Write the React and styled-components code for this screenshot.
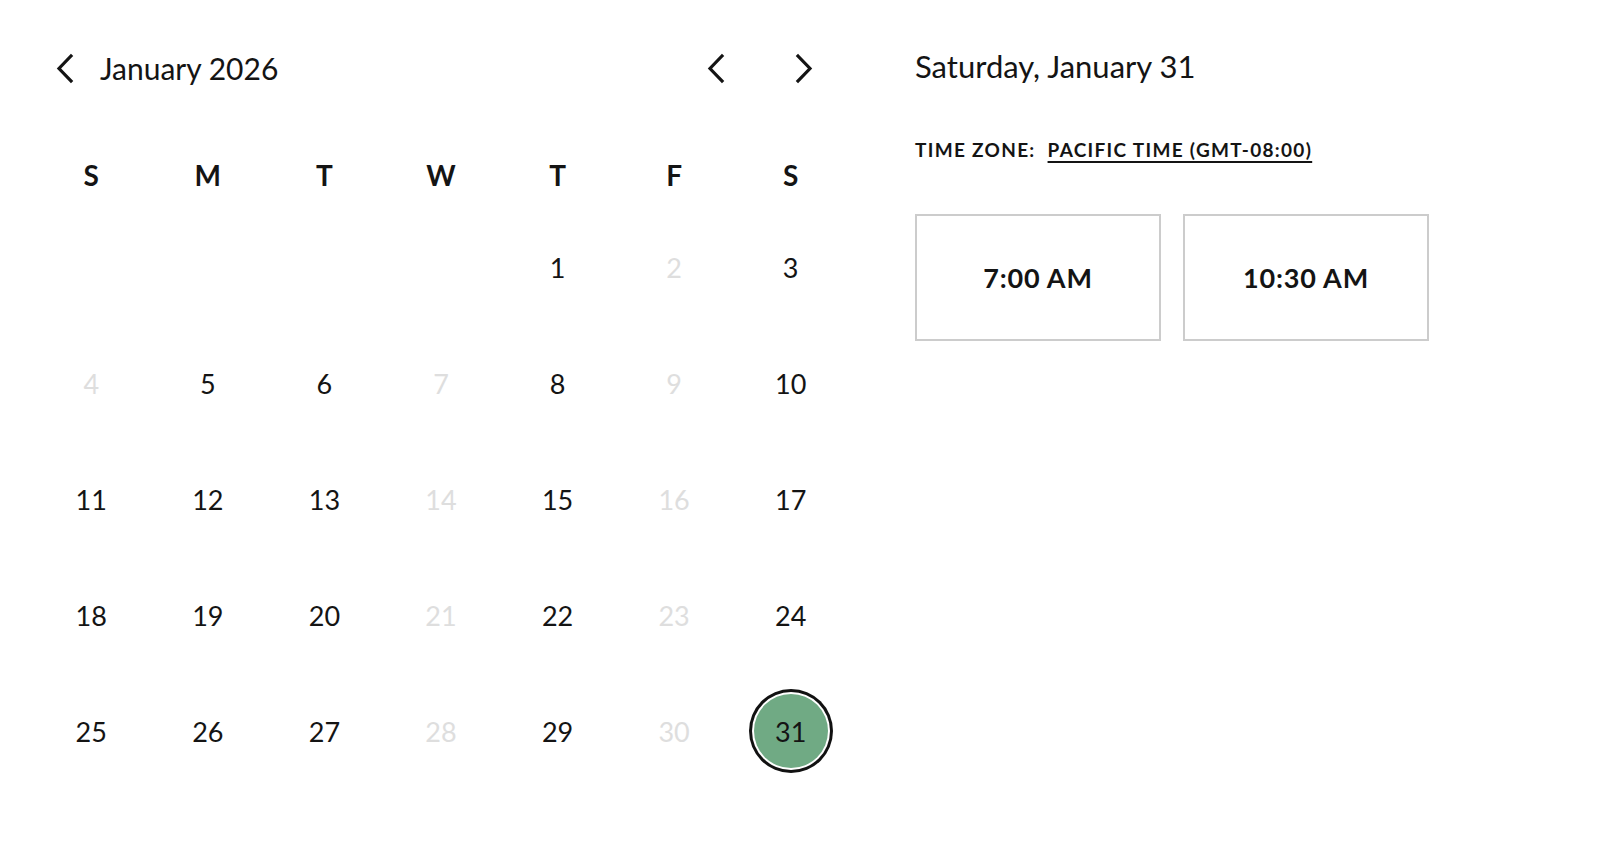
import React, { useState } from "react";
import styled, { createGlobalStyle } from "styled-components";

const GlobalStyle = createGlobalStyle`
  html, body {
    margin: 0;
    padding: 0;
    background: #ffffff;
  }
  body {
    font-family: Lato, "Liberation Sans", sans-serif;
    color: #141414;
  }
`;

const WEEKDAYS = ["S", "M", "T", "W", "T", "F", "S"];
const UNAVAILABLE = [2, 4, 7, 9, 14, 16, 21, 23, 28, 30];
const TIMES = ["7:00 AM", "10:30 AM"];

function Chevron({ dir }) {
  const points = dir === "left" ? "17,3 5,15.5 17,28" : "4,3 16,15.5 4,28";
  return (
    <svg width="22" height="31" viewBox="0 0 22 31" fill="none">
      <polyline
        points={points}
        stroke="#141414"
        strokeWidth="3.2"
        strokeLinecap="square"
        strokeLinejoin="miter"
      />
    </svg>
  );
}

function App() {
  const [selected, setSelected] = useState(31);

  // January 2026 starts on a Thursday
  const cells = [];
  for (let i = 0; i < 4; i++) cells.push(null);
  for (let d = 1; d <= 31; d++) cells.push(d);

  return (
    <>
      <GlobalStyle />
      <Page>
        <CalendarPanel>
          <Header>
            <TitleGroup>
              <IconButton aria-label="Back">
                <Chevron dir="left" />
              </IconButton>
              <MonthTitle>January 2026</MonthTitle>
            </TitleGroup>
            <NavGroup>
              <IconButton aria-label="Previous month">
                <Chevron dir="left" />
              </IconButton>
              <IconButton aria-label="Next month">
                <Chevron dir="right" />
              </IconButton>
            </NavGroup>
          </Header>

          <WeekRow>
            {WEEKDAYS.map((w, i) => (
              <WeekLabel key={i}>{w}</WeekLabel>
            ))}
          </WeekRow>

          <DayGrid>
            {cells.map((d, i) => (
              <DayCell key={i}>
                {d && (
                  <DayNumber
                    $disabled={UNAVAILABLE.includes(d)}
                    $selected={d === selected}
                    onClick={() => !UNAVAILABLE.includes(d) && setSelected(d)}
                  >
                    {d}
                  </DayNumber>
                )}
              </DayCell>
            ))}
          </DayGrid>
        </CalendarPanel>

        <TimesPanel>
          <DateHeading>Saturday, January {selected}</DateHeading>
          <TimeZone>
            <span>Time zone:</span>
            <TimeZoneLink href="#">Pacific Time (GMT-08:00)</TimeZoneLink>
          </TimeZone>
          <SlotList>
            {TIMES.map((t) => (
              <SlotButton key={t}>{t}</SlotButton>
            ))}
          </SlotList>
        </TimesPanel>
      </Page>
    </>
  );
}

export default App;

const Page = styled.div`
  display: flex;
  align-items: flex-start;
  gap: 66px;
  padding: 39px 0 0 33px;
`;

const CalendarPanel = styled.section`
  width: 816px;
`;

const Header = styled.div`
  display: flex;
  align-items: center;
  justify-content: space-between;
  height: 58px;
  margin-bottom: 44px;
`;

const TitleGroup = styled.div`
  display: flex;
  align-items: center;
  gap: 13px;
  padding-left: 10px;
`;

const NavGroup = styled.div`
  display: flex;
  align-items: center;
  gap: 45px;
  padding-right: 22px;
`;

const IconButton = styled.button`
  display: flex;
  align-items: center;
  justify-content: center;
  width: 44px;
  height: 44px;
  padding: 0;
  border: none;
  background: none;
  cursor: pointer;
`;

const MonthTitle = styled.h2`
  margin: 0;
  font-size: 30px;
  font-weight: 400;
  color: #141414;
`;

const WeekRow = styled.div`
  display: grid;
  grid-template-columns: repeat(7, 1fr);
  height: 68px;
  align-items: center;
`;

const WeekLabel = styled.div`
  text-align: center;
  font-size: 28px;
  font-weight: 700;
`;

const DayGrid = styled.div`
  display: grid;
  grid-template-columns: repeat(7, 1fr);
  grid-auto-rows: 116px;
`;

const DayCell = styled.div`
  display: flex;
  align-items: center;
  justify-content: center;
`;

const DayNumber = styled.span`
  display: flex;
  align-items: center;
  justify-content: center;
  width: 74px;
  height: 74px;
  border-radius: 50%;
  font-size: 27px;
  color: ${(p) => (p.$disabled ? "#dedede" : "#141414")};
  cursor: ${(p) => (p.$disabled ? "default" : "pointer")};
  background: ${(p) => (p.$selected ? "#70aa84" : "transparent")};
  box-shadow: ${(p) =>
    p.$selected ? "0 0 0 2px #ffffff, 0 0 0 5px #111111" : "none"};
`;

const TimesPanel = styled.section`
  padding-top: 10px;
`;

const DateHeading = styled.h3`
  margin: 0;
  font-size: 31px;
  font-weight: 400;
  line-height: 35px;
`;

const TimeZone = styled.div`
  display: flex;
  gap: 12px;
  margin-top: 54px;
  font-size: 19px;
  font-weight: 700;
  letter-spacing: 1.3px;
  text-transform: uppercase;
`;

const TimeZoneLink = styled.a`
  color: #141414;
  text-decoration: underline;
  text-underline-offset: 4px;
  text-decoration-thickness: 2px;
`;

const SlotList = styled.div`
  display: flex;
  gap: 22px;
  margin-top: 53px;
`;

const SlotButton = styled.button`
  width: 246px;
  height: 127px;
  border: 2px solid #cccccc;
  background: #ffffff;
  font-family: Lato, "Liberation Sans", sans-serif;
  font-size: 27px;
  font-weight: 700;
  letter-spacing: 0.8px;
  color: #141414;
  cursor: pointer;
`;
